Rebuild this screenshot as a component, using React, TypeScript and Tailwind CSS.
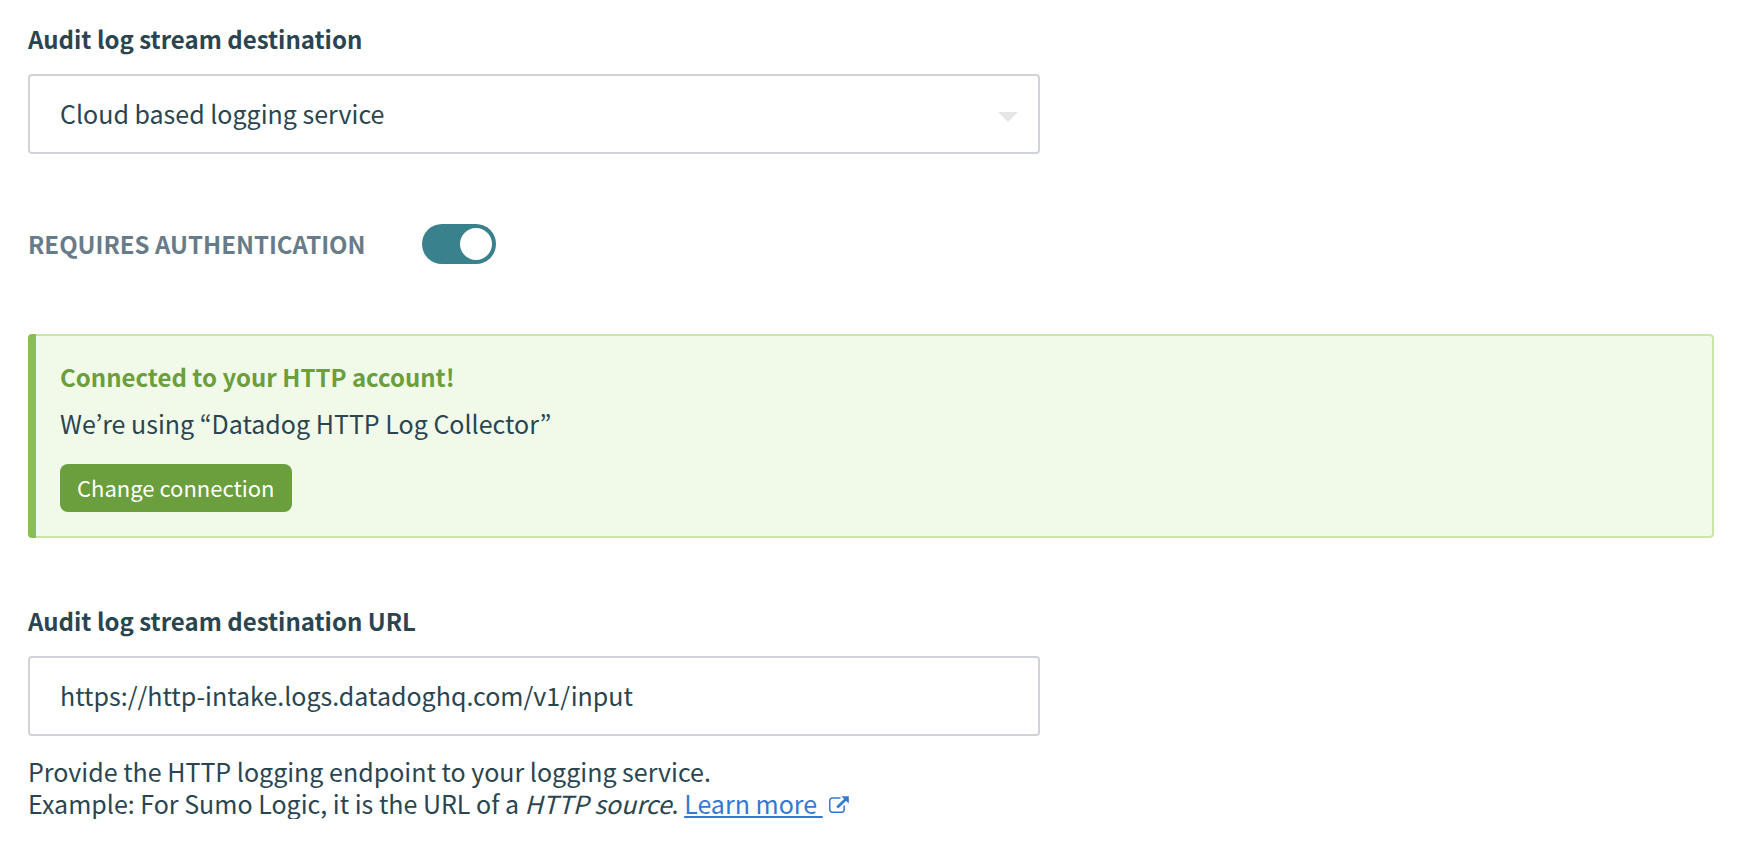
import { useState } from "react";

const fieldClass =
  "block h-20 w-full appearance-none rounded border-2 border-[#d0d4da] bg-white px-[30px] pb-0.5 text-[25px] leading-10 text-[#2a4550] outline-none";

function ExternalLinkIcon() {
  return (
    <svg
      viewBox="0 0 20 18"
      className="ml-1.5 inline-block h-[18px] w-5 align-baseline"
      fill="none"
      aria-hidden="true"
    >
      <path
        d="M11.5 2H3.5A2.7 2.7 0 0 0 .8 4.7V13.5A2.7 2.7 0 0 0 3.5 16.2H12.5A2.7 2.7 0 0 0 15.2 13.5V9.5"
        stroke="#3578d4"
        strokeWidth="1.5"
      />
      <path d="M8.2 11.5L17 3" stroke="#3578d4" strokeWidth="2.6" />
      <path d="M12.3 .3H19.8V7.6Z" fill="#3578d4" />
    </svg>
  );
}

export default function App() {
  const [destination, setDestination] = useState("cloud");
  const [requiresAuth, setRequiresAuth] = useState(true);
  const [url, setUrl] = useState("https://http-intake.logs.datadoghq.com/v1/input");

  return (
    <main className="bg-white pt-[23px] pr-9 pl-7 font-['Noto_Sans_CJK_KR','Noto_Sans',sans-serif] text-[25px] leading-8 text-[#2a4550]">
      <form onSubmit={(event) => event.preventDefault()}>
        <div className="w-3/5">
          <label htmlFor="destination" className="block text-[24px] leading-8 font-bold">
            Audit log stream destination
          </label>
          <div className="relative mt-[19px]">
            <select
              id="destination"
              value={destination}
              onChange={(event) => setDestination(event.target.value)}
              className={fieldClass}
            >
              <option value="cloud">Cloud based logging service</option>
            </select>
            <svg
              viewBox="0 0 20 10"
              className="pointer-events-none absolute top-[38px] right-[22px] h-2.5 w-5"
              aria-hidden="true"
            >
              <path d="M0 0H20L10 10Z" fill="#e3e7ea" />
            </svg>
          </div>
        </div>

        <div className="mt-[70px] flex h-10 items-center gap-14">
          <label
            htmlFor="requires-auth"
            className="text-[24px] leading-8 font-bold text-[#687b88] uppercase"
          >
            Requires authentication
          </label>
          <input
            id="requires-auth"
            type="checkbox"
            role="switch"
            checked={requiresAuth}
            onChange={(event) => setRequiresAuth(event.target.checked)}
            className="flex h-10 w-[74px] appearance-none rounded-full bg-[#b8c2c9] p-1 before:size-8 before:rounded-full before:bg-white checked:justify-end checked:bg-[#3a818e]"
          />
        </div>

        <section className="mt-[70px] flex overflow-hidden rounded">
          <div className="w-2 shrink-0 bg-[#88bf55]" />
          <div className="grow rounded-r border-2 border-l-0 border-[#c8e8a5] bg-[#f1fae9] pt-[25px] pb-6 pl-6">
            <h2 className="text-[24px] leading-8 font-bold text-[#6b9e3c]">
              Connected to your HTTP account!
            </h2>
            <p className="mt-3.5">We’re using “Datadog HTTP Log Collector”</p>
            <button
              type="button"
              className="mt-[25px] flex h-12 items-center rounded-lg bg-[#6b9e3c] px-[17px] pb-0.5 text-[22px] leading-7 text-white"
            >
              Change connection
            </button>
          </div>
        </section>

        <div className="mt-[67px] w-3/5">
          <label htmlFor="destination-url" className="block text-[24px] leading-8 font-bold">
            Audit log stream destination URL
          </label>
          <input
            id="destination-url"
            type="text"
            value={url}
            onChange={(event) => setUrl(event.target.value)}
            className={`mt-[19px] ${fieldClass}`}
          />
        </div>
        <p className="mt-[19px]">
          Provide the HTTP logging endpoint to your logging service.
          <br />
          Example: For Sumo Logic, it is the URL of a <em>HTTP source</em>.{" "}
          <a href="#learn-more" className="whitespace-nowrap text-[#3578d4]">
            <span className="whitespace-pre underline decoration-2 underline-offset-2">{"Learn more "}</span>
            <ExternalLinkIcon />
          </a>
        </p>
      </form>
    </main>
  );
}
